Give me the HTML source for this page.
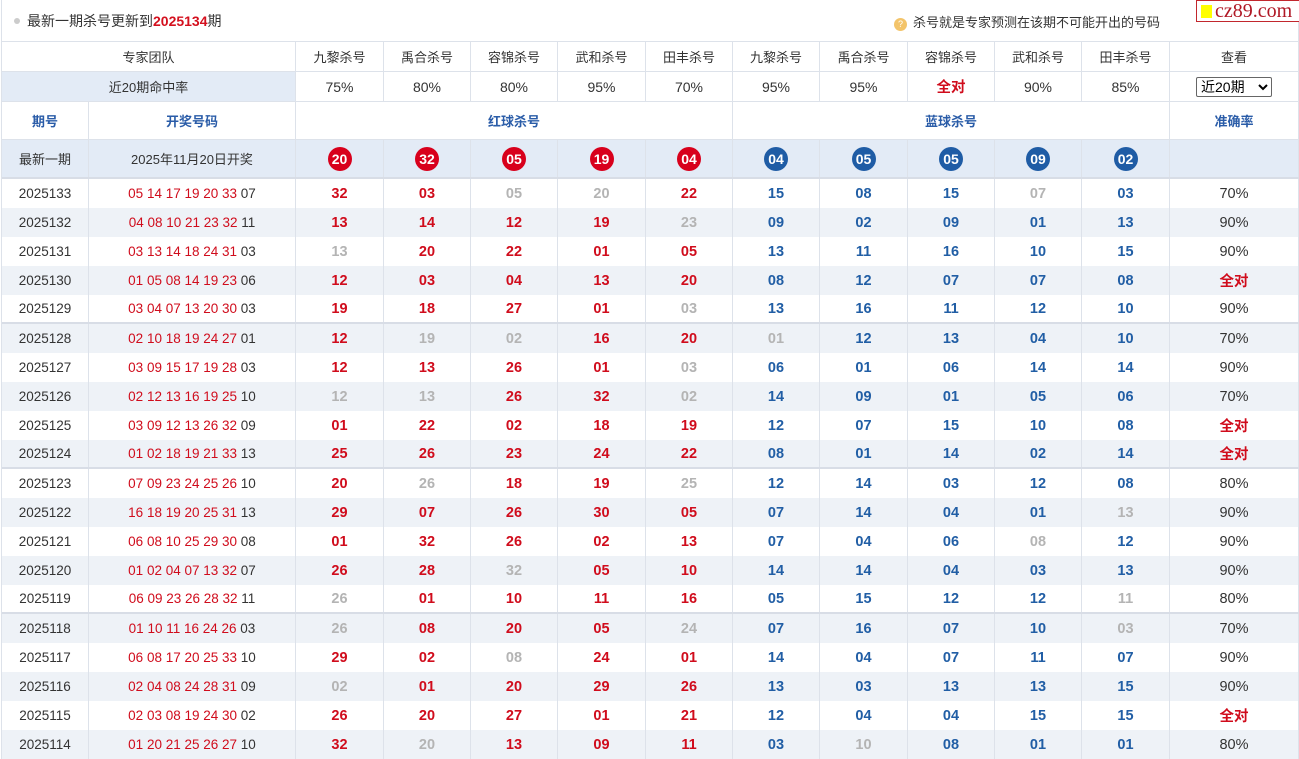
<!DOCTYPE html>
<html><head><meta charset="utf-8"><style>
*{box-sizing:border-box;margin:0;padding:0}
body{width:1299px;height:759px;overflow:hidden;background:#fff;font-family:"Liberation Sans","Noto Sans CJK SC",sans-serif;font-size:13px;color:#333}
.wrap{position:absolute;left:1px;top:0;width:1298px;border-left:1px solid #dde2ea}
.title{height:42px;position:relative;border-bottom:1px solid #dde2ea;border-right:1px solid #dde2ea}
.title .t{position:absolute;left:12px;top:11px;font-size:14px;color:#333}
.title .t b{color:#d4101e}
.dot{display:inline-block;width:6px;height:6px;border-radius:3px;background:#ccc;margin-right:7px;vertical-align:2px}
.tip{position:absolute;left:892px;top:12px;font-size:13px;color:#333}
.q{display:inline-block;width:13px;height:13px;border-radius:7px;background:#f3c46a;color:#fff;font-size:9px;text-align:center;line-height:13px;margin-right:6px;vertical-align:0}
.logo{position:absolute;left:1194px;top:0px;width:104px;height:22px;border:1px solid #c2272d;background:#fff;font-family:"Liberation Serif",serif;color:#b01825;font-size:20px;line-height:20px;padding-left:4px}
.logo i{display:inline-block;width:11px;height:13px;background:#ff0;margin-right:3px;vertical-align:-1px}
.r{display:flex;border-bottom:1px solid #dde2ea}
.c{border-right:1px solid #dde2ea;display:flex;align-items:center;justify-content:center;white-space:nowrap}
.w0{width:87px}.w1{width:207px}.a{width:88px}.b{width:87px}.w2{width:129px}
.wt{width:294px}
.h1{height:30px}.h1 .c{font-size:13px}
.h2{height:30px}.h2 .c{font-size:14px}
.h3{height:38px;color:#2a5ca8;font-weight:bold;font-size:13px}
.h4{height:39px;background:#e3ebf6;border-bottom:2px solid #d8dde6}
.ball{width:24px;height:24px;border-radius:12px;color:#fff;font-weight:bold;font-size:14px;display:flex;align-items:center;justify-content:center}
.rb{background:#d8001c}.bb{background:#1f5ca5}
.d{height:29px;border-bottom:none}
.d:nth-child(even){background:#eef2f7}
.sep{border-bottom:2px solid #d8dde6}
.d .c{font-size:13.5px}
.x{color:#d00c1c;font-weight:bold;font-size:14.5px!important}
.y{color:#215ea5;font-weight:bold;font-size:14.5px!important}
.g{color:#b4b4b4;font-weight:bold;font-size:14.5px!important}
.k{color:#d00c1c}
.ok{color:#d00c1c;font-weight:bold;font-size:14.5px!important}
.d .w2{font-size:14.5px}
select{font-size:14px;height:20px;width:76px;border:1px solid #666;border-radius:2px;background:#fff;font-family:"Liberation Sans","Noto Sans CJK SC",sans-serif}
</style></head><body>
<div class="wrap">
<div class="title"><div class="t"><span class="dot"></span>最新一期杀号更新到<b>2025134</b>期</div>
<div class="tip"><span class="q">?</span>杀号就是专家预测在该期不可能开出的号码</div>
<div class="logo"><i></i>cz89.com</div></div>
<div class="r h1"><div class="c wt">专家团队</div><div class="c a">九黎杀号</div><div class="c b">禹合杀号</div><div class="c b">容锦杀号</div><div class="c a">武和杀号</div><div class="c b">田丰杀号</div><div class="c b">九黎杀号</div><div class="c a">禹合杀号</div><div class="c b">容锦杀号</div><div class="c b">武和杀号</div><div class="c a">田丰杀号</div><div class="c w2">查看</div></div>
<div class="r h2"><div class="c wt" style="background:#e3ebf6;font-size:13px">近20期命中率</div><div class="c a">75%</div><div class="c b">80%</div><div class="c b">80%</div><div class="c a">95%</div><div class="c b">70%</div><div class="c b">95%</div><div class="c a">95%</div><div class="c b ok">全对</div><div class="c b">90%</div><div class="c a">85%</div><div class="c w2"><select><option>近20期</option></select></div></div>
<div class="r h3"><div class="c w0">期号</div><div class="c w1">开奖号码</div><div class="c" style="width:437px">红球杀号</div><div class="c" style="width:437px">蓝球杀号</div><div class="c w2">准确率</div></div>
<div class="r h4"><div class="c w0">最新一期</div><div class="c w1">2025年11月20日开奖</div><div class="c a"><span class="ball rb">20</span></div><div class="c b"><span class="ball rb">32</span></div><div class="c b"><span class="ball rb">05</span></div><div class="c a"><span class="ball rb">19</span></div><div class="c b"><span class="ball rb">04</span></div><div class="c b"><span class="ball bb">04</span></div><div class="c a"><span class="ball bb">05</span></div><div class="c b"><span class="ball bb">05</span></div><div class="c b"><span class="ball bb">09</span></div><div class="c a"><span class="ball bb">02</span></div><div class="c w2"></div></div>
<div>
<div class="r d"><div class="c w0">2025133</div><div class="c w1"><span class="k">05 14 17 19 20 33</span>&nbsp;07</div><div class="c a x">32</div><div class="c b x">03</div><div class="c b g">05</div><div class="c a g">20</div><div class="c b x">22</div><div class="c b y">15</div><div class="c a y">08</div><div class="c b y">15</div><div class="c b g">07</div><div class="c a y">03</div><div class="c w2">70%</div></div>
<div class="r d"><div class="c w0">2025132</div><div class="c w1"><span class="k">04 08 10 21 23 32</span>&nbsp;11</div><div class="c a x">13</div><div class="c b x">14</div><div class="c b x">12</div><div class="c a x">19</div><div class="c b g">23</div><div class="c b y">09</div><div class="c a y">02</div><div class="c b y">09</div><div class="c b y">01</div><div class="c a y">13</div><div class="c w2">90%</div></div>
<div class="r d"><div class="c w0">2025131</div><div class="c w1"><span class="k">03 13 14 18 24 31</span>&nbsp;03</div><div class="c a g">13</div><div class="c b x">20</div><div class="c b x">22</div><div class="c a x">01</div><div class="c b x">05</div><div class="c b y">13</div><div class="c a y">11</div><div class="c b y">16</div><div class="c b y">10</div><div class="c a y">15</div><div class="c w2">90%</div></div>
<div class="r d"><div class="c w0">2025130</div><div class="c w1"><span class="k">01 05 08 14 19 23</span>&nbsp;06</div><div class="c a x">12</div><div class="c b x">03</div><div class="c b x">04</div><div class="c a x">13</div><div class="c b x">20</div><div class="c b y">08</div><div class="c a y">12</div><div class="c b y">07</div><div class="c b y">07</div><div class="c a y">08</div><div class="c w2 ok">全对</div></div>
<div class="r d sep"><div class="c w0">2025129</div><div class="c w1"><span class="k">03 04 07 13 20 30</span>&nbsp;03</div><div class="c a x">19</div><div class="c b x">18</div><div class="c b x">27</div><div class="c a x">01</div><div class="c b g">03</div><div class="c b y">13</div><div class="c a y">16</div><div class="c b y">11</div><div class="c b y">12</div><div class="c a y">10</div><div class="c w2">90%</div></div>
<div class="r d"><div class="c w0">2025128</div><div class="c w1"><span class="k">02 10 18 19 24 27</span>&nbsp;01</div><div class="c a x">12</div><div class="c b g">19</div><div class="c b g">02</div><div class="c a x">16</div><div class="c b x">20</div><div class="c b g">01</div><div class="c a y">12</div><div class="c b y">13</div><div class="c b y">04</div><div class="c a y">10</div><div class="c w2">70%</div></div>
<div class="r d"><div class="c w0">2025127</div><div class="c w1"><span class="k">03 09 15 17 19 28</span>&nbsp;03</div><div class="c a x">12</div><div class="c b x">13</div><div class="c b x">26</div><div class="c a x">01</div><div class="c b g">03</div><div class="c b y">06</div><div class="c a y">01</div><div class="c b y">06</div><div class="c b y">14</div><div class="c a y">14</div><div class="c w2">90%</div></div>
<div class="r d"><div class="c w0">2025126</div><div class="c w1"><span class="k">02 12 13 16 19 25</span>&nbsp;10</div><div class="c a g">12</div><div class="c b g">13</div><div class="c b x">26</div><div class="c a x">32</div><div class="c b g">02</div><div class="c b y">14</div><div class="c a y">09</div><div class="c b y">01</div><div class="c b y">05</div><div class="c a y">06</div><div class="c w2">70%</div></div>
<div class="r d"><div class="c w0">2025125</div><div class="c w1"><span class="k">03 09 12 13 26 32</span>&nbsp;09</div><div class="c a x">01</div><div class="c b x">22</div><div class="c b x">02</div><div class="c a x">18</div><div class="c b x">19</div><div class="c b y">12</div><div class="c a y">07</div><div class="c b y">15</div><div class="c b y">10</div><div class="c a y">08</div><div class="c w2 ok">全对</div></div>
<div class="r d sep"><div class="c w0">2025124</div><div class="c w1"><span class="k">01 02 18 19 21 33</span>&nbsp;13</div><div class="c a x">25</div><div class="c b x">26</div><div class="c b x">23</div><div class="c a x">24</div><div class="c b x">22</div><div class="c b y">08</div><div class="c a y">01</div><div class="c b y">14</div><div class="c b y">02</div><div class="c a y">14</div><div class="c w2 ok">全对</div></div>
<div class="r d"><div class="c w0">2025123</div><div class="c w1"><span class="k">07 09 23 24 25 26</span>&nbsp;10</div><div class="c a x">20</div><div class="c b g">26</div><div class="c b x">18</div><div class="c a x">19</div><div class="c b g">25</div><div class="c b y">12</div><div class="c a y">14</div><div class="c b y">03</div><div class="c b y">12</div><div class="c a y">08</div><div class="c w2">80%</div></div>
<div class="r d"><div class="c w0">2025122</div><div class="c w1"><span class="k">16 18 19 20 25 31</span>&nbsp;13</div><div class="c a x">29</div><div class="c b x">07</div><div class="c b x">26</div><div class="c a x">30</div><div class="c b x">05</div><div class="c b y">07</div><div class="c a y">14</div><div class="c b y">04</div><div class="c b y">01</div><div class="c a g">13</div><div class="c w2">90%</div></div>
<div class="r d"><div class="c w0">2025121</div><div class="c w1"><span class="k">06 08 10 25 29 30</span>&nbsp;08</div><div class="c a x">01</div><div class="c b x">32</div><div class="c b x">26</div><div class="c a x">02</div><div class="c b x">13</div><div class="c b y">07</div><div class="c a y">04</div><div class="c b y">06</div><div class="c b g">08</div><div class="c a y">12</div><div class="c w2">90%</div></div>
<div class="r d"><div class="c w0">2025120</div><div class="c w1"><span class="k">01 02 04 07 13 32</span>&nbsp;07</div><div class="c a x">26</div><div class="c b x">28</div><div class="c b g">32</div><div class="c a x">05</div><div class="c b x">10</div><div class="c b y">14</div><div class="c a y">14</div><div class="c b y">04</div><div class="c b y">03</div><div class="c a y">13</div><div class="c w2">90%</div></div>
<div class="r d sep"><div class="c w0">2025119</div><div class="c w1"><span class="k">06 09 23 26 28 32</span>&nbsp;11</div><div class="c a g">26</div><div class="c b x">01</div><div class="c b x">10</div><div class="c a x">11</div><div class="c b x">16</div><div class="c b y">05</div><div class="c a y">15</div><div class="c b y">12</div><div class="c b y">12</div><div class="c a g">11</div><div class="c w2">80%</div></div>
<div class="r d"><div class="c w0">2025118</div><div class="c w1"><span class="k">01 10 11 16 24 26</span>&nbsp;03</div><div class="c a g">26</div><div class="c b x">08</div><div class="c b x">20</div><div class="c a x">05</div><div class="c b g">24</div><div class="c b y">07</div><div class="c a y">16</div><div class="c b y">07</div><div class="c b y">10</div><div class="c a g">03</div><div class="c w2">70%</div></div>
<div class="r d"><div class="c w0">2025117</div><div class="c w1"><span class="k">06 08 17 20 25 33</span>&nbsp;10</div><div class="c a x">29</div><div class="c b x">02</div><div class="c b g">08</div><div class="c a x">24</div><div class="c b x">01</div><div class="c b y">14</div><div class="c a y">04</div><div class="c b y">07</div><div class="c b y">11</div><div class="c a y">07</div><div class="c w2">90%</div></div>
<div class="r d"><div class="c w0">2025116</div><div class="c w1"><span class="k">02 04 08 24 28 31</span>&nbsp;09</div><div class="c a g">02</div><div class="c b x">01</div><div class="c b x">20</div><div class="c a x">29</div><div class="c b x">26</div><div class="c b y">13</div><div class="c a y">03</div><div class="c b y">13</div><div class="c b y">13</div><div class="c a y">15</div><div class="c w2">90%</div></div>
<div class="r d"><div class="c w0">2025115</div><div class="c w1"><span class="k">02 03 08 19 24 30</span>&nbsp;02</div><div class="c a x">26</div><div class="c b x">20</div><div class="c b x">27</div><div class="c a x">01</div><div class="c b x">21</div><div class="c b y">12</div><div class="c a y">04</div><div class="c b y">04</div><div class="c b y">15</div><div class="c a y">15</div><div class="c w2 ok">全对</div></div>
<div class="r d"><div class="c w0">2025114</div><div class="c w1"><span class="k">01 20 21 25 26 27</span>&nbsp;10</div><div class="c a x">32</div><div class="c b g">20</div><div class="c b x">13</div><div class="c a x">09</div><div class="c b x">11</div><div class="c b y">03</div><div class="c a g">10</div><div class="c b y">08</div><div class="c b y">01</div><div class="c a y">01</div><div class="c w2">80%</div></div>
</div>
</div>
</body></html>
